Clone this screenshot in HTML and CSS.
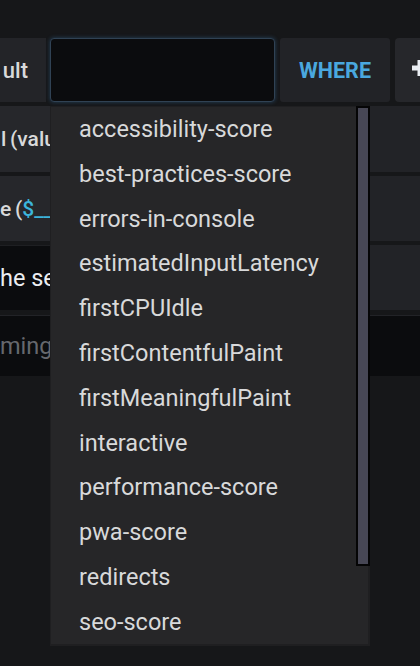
FILE: index.html
```html
<!DOCTYPE html>
<html lang="en">
<head>
<meta charset="utf-8">
<title>Query editor</title>
<link rel="stylesheet" href="styles.css">
</head>
<body>
<div class="editor">
  <div class="row row-1">
    <div class="label label-from"><span class="bold">ult</span></div>
    <div class="input input-focus"></div>
    <div class="label keyword">WHERE</div>
    <div class="label plus">
      <svg class="plus-icon" width="16" height="16" viewBox="0 0 16 16" aria-hidden="true">
        <rect x="0" y="5.5" width="16" height="5" fill="#e9edf2"/>
        <rect x="5.5" y="0" width="5" height="16" fill="#e9edf2"/>
      </svg>
    </div>
  </div>
  <div class="row row-2">
    <div class="label label-wide"><span class="bold">l (valu</span></div>
    <div class="label filler"></div>
  </div>
  <div class="row row-3">
    <div class="label label-wide"><span class="bold">e (<span class="var">$__i</span></span></div>
    <div class="label filler"></div>
  </div>
  <div class="row row-4">
    <div class="input select"><span>he se</span></div>
    <div class="label filler"></div>
  </div>
  <div class="row row-5">
    <div class="input full"><span class="placeholder">ming</span></div>
  </div>

  <div class="dropdown">
    <ul class="menu">
      <li>accessibility-score</li>
      <li>best-practices-score</li>
      <li>errors-in-console</li>
      <li>estimatedInputLatency</li>
      <li>firstCPUIdle</li>
      <li>firstContentfulPaint</li>
      <li>firstMeaningfulPaint</li>
      <li>interactive</li>
      <li>performance-score</li>
      <li>pwa-score</li>
      <li>redirects</li>
      <li>seo-score</li>
    </ul>
    <div class="scrollbar"><div class="thumb"></div></div>
  </div>
</div>
</body>
</html>
```

FILE: styles.css
```css
html, body {
  margin: 0;
  padding: 0;
  background: #161719;
  height: 100%;
  overflow: hidden;
}

body {
  font-family: Roboto, "Liberation Sans", Arial, sans-serif;
  color: #d8d9da;
}

.editor {
  position: relative;
  padding-top: 38px;
  display: flex;
  flex-direction: column;
  gap: 4px;
}

.row {
  display: flex;
  align-items: stretch;
}

.row > * { flex-shrink: 0; }

.row-1 { height: 64px; gap: 4px; }
.row-2 { height: 66px; gap: 10px; }
.row-3 { height: 65px; gap: 10px; }
.row-4 { height: 65px; gap: 6px; }
.row-5 { height: 61px; margin-top: 1px; }

.label {
  background: #232428;
  display: flex;
  align-items: center;
  font-size: 21px;
  white-space: nowrap;
}

.bold {
  font-weight: 500;
  color: #d8d9da;
  font-size: 21px;
  word-spacing: -1.5px;
}

.label-from {
  width: 46px;
  padding-right: 18px;
  box-sizing: border-box;
  justify-content: flex-end;
}

.label-from .bold { font-size: 22px; }

.input {
  background: #0b0c0e;
  box-sizing: border-box;
  display: flex;
  align-items: center;
  font-size: 23px;
  white-space: nowrap;
}

.input-focus {
  width: 225px;
  border: 1px solid #304254;
  border-radius: 4px;
  box-shadow: 0 0 4px rgba(60, 130, 190, 0.4);
}

.keyword {
  width: 110px;
  margin-left: 1px;
  justify-content: center;
  color: #4aa8df;
  font-weight: 700;
  font-size: 21.5px;
  border-radius: 3px;
  background: #222327;
}

.plus {
  flex: 1 1 0;
  min-width: 0;
  overflow: hidden;
  margin-left: 1px;
  padding-left: 17px;
  border-radius: 4px 0 0 4px;
  background: #26272b;
}

.plus-icon {
  flex-shrink: 0;
  margin-top: -4px;
}

.label-wide {
  width: 360px;
  padding-left: 0;
  background: #26272b;
}

.row-2 .label-wide span { margin-left: 1px; }

.var { color: #3cb5da; }

.filler { flex: 1 1 0; min-width: 0; background: #222327; }

.select {
  width: 300px;
  border-top: 1px solid #1e1f22;
  color: #eceef1;
  font-size: 23.5px;
}

.full {
  flex: 1 1 0;
  border-top: 1px solid #222327;
  font-size: 23.5px;
}

.placeholder { color: #66686d; }

.dropdown {
  position: absolute;
  left: 50px;
  top: 106px;
  width: 320px;
  height: 540px;
  box-sizing: border-box;
  background: #262628;
  border: 1px solid #1f1f21;
  border-right-width: 2px;
  border-bottom-width: 2px;
}

.menu {
  list-style: none;
  margin: 0;
  padding: 0 0 0 28px;
}

.menu li {
  font-size: 23.5px;
  line-height: 44.8px;
  height: 44.8px;
  color: #d8d9da;
  white-space: nowrap;
}

.scrollbar {
  position: absolute;
  top: -1px;
  right: -2px;
  width: 14px;
  height: 460px;
  box-sizing: border-box;
  border: 2px solid #050506;
  background: #050506;
}

.thumb {
  height: 100%;
  background: #474755;
}
```
